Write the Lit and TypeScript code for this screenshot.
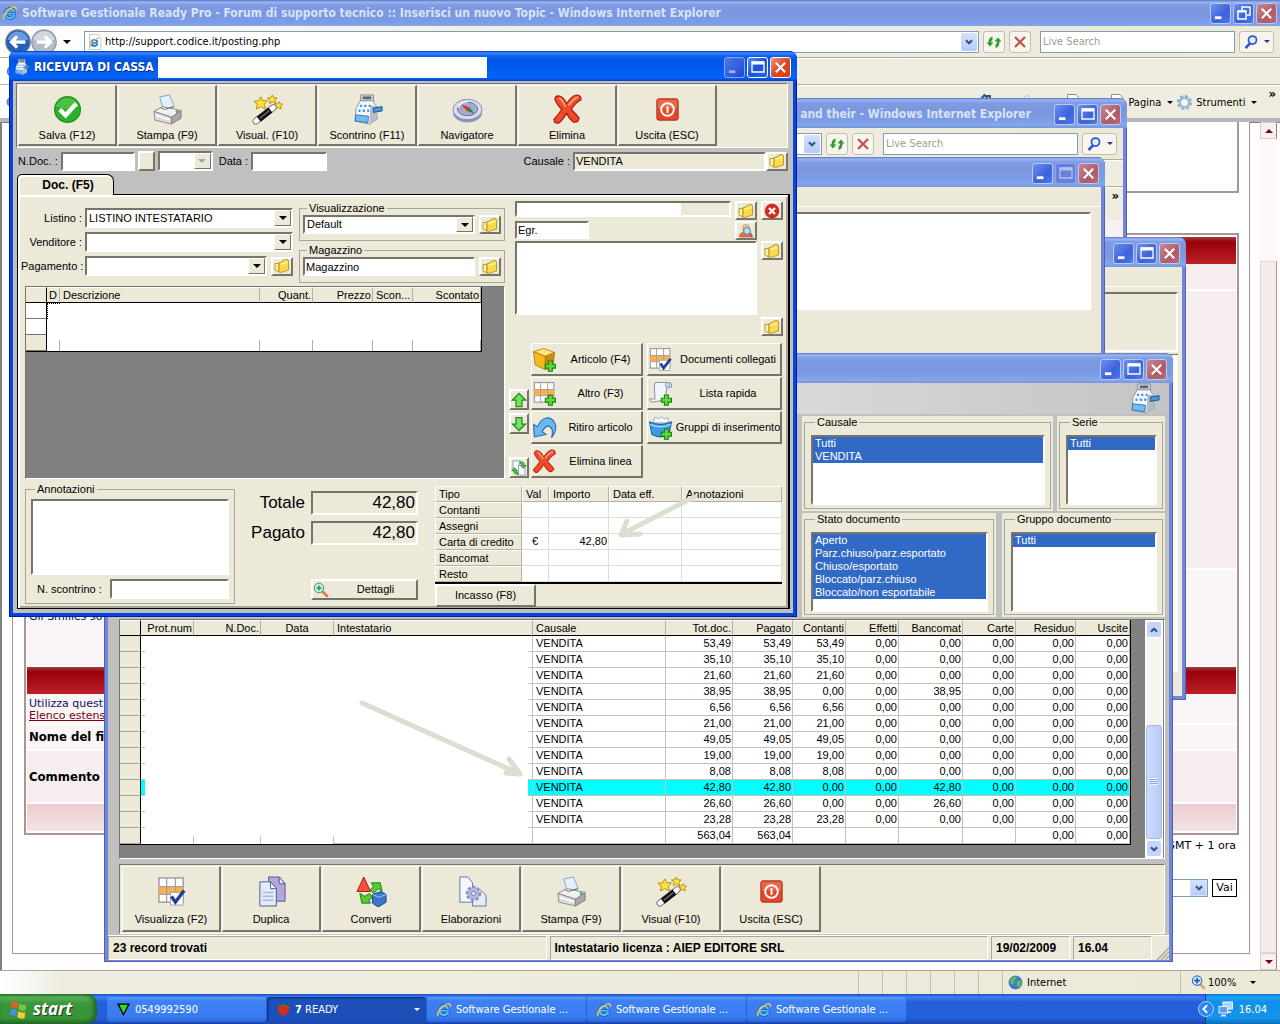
import { LitElement, html, svg, css, nothing, TemplateResult } from "lit";
import { customElement, property } from "lit/decorators.js";
import { classMap } from "lit/directives/class-map.js";

/* ---------- icons ---------- */
const icon = (size: number, body: TemplateResult, box = 32) =>
  html`<svg width=${size} height=${size} viewBox="0 0 ${box} ${box}" aria-hidden="true">${body}</svg>`;

const plus = svg`<path d="M21 18h5v4h4v5h-4v4h-5v-4h-4v-5h4z" fill="#5fd830" stroke="#17801a" stroke-width="1.4"/>`;
const sheetGrid = svg`
  <rect x="3" y="2" width="25" height="25" fill="#fff" stroke="#9d9aa8" stroke-width="1.5"/>
  <rect x="3" y="11" width="25" height="8" fill="#fbb04a"/>
  <path d="M3 11h25M3 19h25M11 2v25M20 2v25" stroke="#a8a0a0" stroke-width="1.3" fill="none"/>`;

const I = {
  check: svg`<circle cx="16" cy="16" r="14" fill="#1f9a1c"/><circle cx="16" cy="16" r="12.5" fill="#2fb02a"/>
    <path d="M4 13a12.500 12.500 0 0 1 24 0q-12 5-24 0z" fill="#62cc55" opacity=".6"/>
    <path d="M8 16l6 6 11-12" fill="none" stroke="#fff" stroke-width="4.500"/>`,
  printer: svg`<path d="M8 3l10-2 5 12-11 4z" fill="#e4f0fc" stroke="#8aa2c4"/>
    <path d="M2 18l9-5 19 4-9 7z" fill="#f2f2f2" stroke="#8c8c8c"/><path d="M2 18l18 6v7L3 27z" fill="#dcdcdc" stroke="#8c8c8c"/>
    <path d="M20 24l10-7v8l-10 6z" fill="#a8a8a8" stroke="#808080"/><path d="M4 22l15 5" stroke="#fff" stroke-width="1.500"/>
    <path d="M9 14l4 2 9-3" stroke="#666" fill="none"/><circle cx="26" cy="18" r="1.600" fill="#58b070"/>`,
  wand: svg`<path d="M4 28L22 14" stroke="#777" stroke-width="7" stroke-linecap="round"/><path d="M4 28L22 14" stroke="#fff" stroke-width="5" stroke-linecap="round"/>
    <path d="M7 26L19 16.500" stroke="#111" stroke-width="6.500"/><path d="M8 25l10-8" stroke="#777" stroke-width="1.300"/>
    <g fill="#ffe438" stroke="#b88a14" stroke-width="1"><path d="M9 3l2 4 5 0-3.500 3.500 1.500 5-5-2.500-4.500 2.500 1-5L2 7.500l5-.5z"/>
    <path d="M21 1l1.500 3 3.500 0-2.500 2.500 1 3.500-3.500-2-3 2 .5-3.500L16 4h3.500z"/><path d="M28 8l1 2 2.500.5-2 2 .5 3-2.500-1.500L25 15l.5-2.500-2-2 3-.5z"/></g>`,
  register: svg`<path d="M9 6l13-1 1 5 2 2 1 14-8 5L3 28l1-13z" fill="#f4f7fa" stroke="#8a949e"/>
    <path d="M19 12l6 0 1 14-8 5z" fill="#b4bcc6"/><path d="M9 1h13v6H9z" fill="#dfe3e8" stroke="#7c858e"/>
    <path d="M11 2.500h9v3h-9z" fill="#5c666e"/>
    <g fill="#3c94e4"><rect x="8" y="11" width="2.500" height="2.500" rx="1"/><rect x="12.500" y="11" width="2.500" height="2.500" rx="1"/><rect x="17" y="11" width="2.500" height="2.500" rx="1"/>
    <rect x="6.500" y="16" width="2.500" height="2.500" rx="1"/><rect x="11" y="16" width="2.500" height="2.500" rx="1"/><rect x="15.500" y="16" width="2.500" height="2.500" rx="1"/></g>
    <path d="M4 21.500l13 1.500-.5 6.500L3.500 28z" fill="#74bcf4" stroke="#3478b8"/><path d="M22 14.500l9-1.500v4.500l-9 1.500z" fill="#4898e4" stroke="#1c5294"/>`,
  compass: svg`<ellipse cx="16" cy="19" rx="15" ry="10.500" fill="#8f92ba"/><ellipse cx="16" cy="16" rx="15" ry="10.500" fill="#dcdcf2" stroke="#8488b0"/>
    <ellipse cx="16" cy="15.500" rx="10.500" ry="7" fill="#a3a8cc" stroke="#6c709c"/><path d="M9 10.500l9 3.500-2.500 3.500z" fill="#e23028"/><path d="M23 20l-7.500-2.500 2.500-3.500z" fill="#1c8a34"/>
    <path d="M6 14q4-6 10-6" stroke="#fff" fill="none" stroke-width="1.500"/>`,
  cross: svg`<path d="M7 2q5 1 8 8 5-8 10-9 5 0 5 5-6 3-10 10 5 5 8 9-1 5-6 4-4-3-7-9-4 7-8 10-5 1-5-4 4-4 8-10Q5 11 3 6q0-4 4-4z" fill="#ee4a2a" stroke="#a81c0c" stroke-width="1.200"/>
    <path d="M7 4q4 2 7 9M27 3q-5 2-10 9" stroke="#ff9a7c" fill="none" stroke-width="2"/>`,
  power: svg`<rect x="5" y="5" width="22" height="22" rx="2" fill="#e0482c" stroke="#a8301c"/><rect x="6" y="6" width="20" height="9" fill="#ee7454" opacity=".7"/>
    <circle cx="16" cy="16" r="6.500" fill="none" stroke="#fff" stroke-width="2"/><path d="M16 12.500v7" stroke="#fff" stroke-width="2"/>`,
  folder: svg`<path d="M2 11h8v17l-8-4z" fill="#fff0a0" stroke="#a88414" stroke-width="1.500"/><path d="M10 9l6-1 3-4 8-1 2 3v18l-16 5-3-1z" fill="#fbd94a" stroke="#a88414" stroke-width="1.500"/>
    <path d="M13 12l14-3" stroke="#fff3a8" stroke-width="3"/>`,
  stop: svg`<circle cx="16" cy="16" r="14" fill="#d42a20" stroke="#941008"/><path d="M10 10l12 12M22 10L10 22" stroke="#fff" stroke-width="4.500"/>`,
  person: svg`<path d="M3 28q0-9 9-10h10q7 2 7 10z" fill="#f0703c" stroke="#a84418"/><circle cx="16" cy="10" r="7" fill="#f6c49c" stroke="#b06c34"/>
    <circle cx="18" cy="16" r="7" fill="#b4dcf6" stroke="#4c7ca8" stroke-width="2"/><path d="M23 21l6 7" stroke="#986438" stroke-width="3"/>`,
  box: svg`<path d="M2 6l13-4 14 5-12 5z" fill="#ffe878" stroke="#a87810"/><path d="M2 6l15 6v17L4 23z" fill="#f4b820" stroke="#a87810"/><path d="M17 12l12-5-2 17-10 5z" fill="#c88a10" stroke="#a87810"/>${plus}`,
  gridPlus: svg`${sheetGrid}${plus}`,
  gridCheck: svg`${sheetGrid}<rect x="15" y="17" width="13" height="13" fill="#fff" stroke="#a0a0b0"/><path d="M16 21l4 6 9-12" stroke="#1c4496" stroke-width="3.500" fill="none"/>`,
  undo: svg`<path d="M2 12l1 16 15-3-5-4q5-9 10-6 5 3 2 14 7-9 5-17Q26 2 17 4q-6 2-10 11z" fill="#6cb6f2" stroke="#2467b0" stroke-width="1.300"/>`,
  scroll: svg`<path d="M8 5q1-4 5-3h14q4 1 3 6h-6l-2 16-15 3q-5 0-5-4h7z" fill="#f3f5fc" stroke="#8c94b0" stroke-width="1.300"/><circle cx="25" cy="5" r="3" fill="#cfd5ea" stroke="#8c94b0"/>${plus}`,
  basket: svg`<path d="M6 10l3-7 5 2 3-3 4 3 4-2 2 7z" fill="#f5f8ff" stroke="#8ca0bc"/><path d="M2 9q14 6 28 0l-3 16q-11 6-22 0z" fill="#3c9ae6" stroke="#175c9e" stroke-width="1.300"/><path d="M3 12q12 6 26 0" stroke="#a6daff" fill="none" stroke-width="2"/>${plus}`,
  up: svg`<path d="M16 3l13 13h-7v13H10V16H3z" fill="#7ce05c" stroke="#1c9024" stroke-width="2.500"/>`,
  down: svg`<path d="M16 29L3 16h7V3h12v13h7z" fill="#7ce05c" stroke="#1c9024" stroke-width="2.500"/>`,
  swap: svg`<rect x="4" y="2" width="13" height="20" fill="#fff" stroke="#7890b0" stroke-width="1.500"/><rect x="15" y="11" width="13" height="19" fill="#fff" stroke="#7890b0" stroke-width="1.500"/>
    <path d="M18 3q9 0 9 8h4l-6 6-6-6h3q0-4-4-4zM14 29q-9 0-9-8H1l6-6 6 6h-3q0 4 4 4z" fill="#40c03c" stroke="#157c1c"/>`,
  zoomPlus: svg`<path d="M19 19l9 9" stroke="#d87c40" stroke-width="5" stroke-linecap="round"/><circle cx="12" cy="12" r="9.500" fill="#c8f0dc" stroke="#4c8ca8" stroke-width="2"/><path d="M12 7v10M7 12h10" stroke="#148a3c" stroke-width="2.500"/>`,
  zoomBlue: svg`<path d="M19 19l9 9" stroke="#d0a060" stroke-width="5" stroke-linecap="round"/><circle cx="13" cy="12" r="10" fill="#d4e8fc" stroke="#3c6cb4" stroke-width="2.500"/><path d="M13 6v12M7 12h12" stroke="#1c58b8" stroke-width="3.500"/>`,
  pages: svg`<path d="M13 1h11l6 7v18H13z" fill="#b4a6dc" stroke="#5e5498"/><path d="M24 1v7h6z" fill="#ece8fa" stroke="#5e5498"/><path d="M4 6h11l6 7v18H4z" fill="#e2ebf8" stroke="#48608c"/><path d="M15 6v7h6z" fill="#fff" stroke="#48608c"/>
    <path d="M7 17h11M7 21h11M7 25h11" stroke="#a8bcdc" stroke-width="1.500"/>`,
  shapes: svg`<path d="M8 1l7 15H1z" fill="#f4523a" stroke="#a01c10"/><path d="M17 19l9-3 5 3v8l-8 5-6-4z" fill="#3c76cc" stroke="#16408c"/><path d="M17 19l7 3 7-3" fill="none" stroke="#a8c8f4"/>
    <path d="M16 7h9l0 0 2 9-4-3-5 5-3-4 3-3zM15 28H6L4 18l5 3 5-3 3 4-4 3z" fill="#54cc34" stroke="#187c14"/>`,
  gearPages: svg`<path d="M4 1h8l5 6v20H4z" fill="#f4f8ff" stroke="#5c78a8"/><path d="M17 14h8l6 6v11H17z" fill="#e4ecfa" stroke="#5c78a8"/>
    <circle cx="18" cy="18" r="6.500" fill="#b4b8e0" stroke="#8c90c0" stroke-width="3" stroke-dasharray="3 1.800"/><circle cx="18" cy="18" r="5.500" fill="#b4b8e0"/><circle cx="18" cy="18" r="2" fill="#fff" stroke="#6c70a8"/>`,
  ie: svg`<circle cx="16" cy="17" r="9" fill="none" stroke="#0c58b4" stroke-width="7" stroke-dasharray="49 7.500" stroke-dashoffset="-3"/><path d="M8 17.500h20" stroke="#0c58b4" stroke-width="5.500"/>
    <circle cx="16" cy="17" r="9" fill="none" stroke="#5cbcfa" stroke-width="4.500" stroke-dasharray="49 7.500" stroke-dashoffset="-3"/><path d="M8 17.500h19" stroke="#5cbcfa" stroke-width="3"/>
    <path d="M4 28Q1 21 12 11 24 1 28 5q1 1 0 5" fill="none" stroke="#fcc838" stroke-width="3"/>`,
  gear: svg`<circle cx="16" cy="16" r="11" fill="none" stroke="#86aac4" stroke-width="6" stroke-dasharray="5 3.600"/><circle cx="16" cy="16" r="8.500" fill="#fff" stroke="#9cbcd2" stroke-width="5"/><circle cx="16" cy="16" r="3.500" fill="#f4f4ec"/>`,
  refresh: svg`<path d="M13 5v7q-3 1-3 5h5l-7 8-7-8h4Q5 7 13 5z" fill="#2c9c2c"/><path d="M19 28v-7q3-1 3-6h-5l7-8 7 8h-4q0 11-8 13z" fill="#2c9c2c"/>`,
  redX: svg`<path d="M6 6l20 20M26 6L6 26" stroke="#c4504c" stroke-width="4.500"/>`,
  lens: svg`<path d="M14 19L5 28" stroke="#2c54d0" stroke-width="5"/><circle cx="19" cy="12" r="8" fill="#e4f2ff" stroke="#2c54d0" stroke-width="3.500"/>`,
  globe: svg`<circle cx="16" cy="16" r="14" fill="#3c7cd8" stroke="#1c4c9c"/><path d="M6 8q6-6 12-4 0 6-5 7l1 6-5 4-5-5zM18 14l8-3 3 6-4 9-6-2z" fill="#5cc04c"/>`,
  triangle: svg`<path d="M2 3h28L16 30z" fill="#000"/><path d="M7 6h18L16 24z" fill="#20e820"/>`,
  berry: svg`<path d="M16 8q12-5 13 5-2 12-13 18Q4 25 3 13 4 3 16 8z" fill="#cc3020"/><path d="M16 1l3 6 5 1-8 3-8-3 5-1z" fill="#4c7c24"/>`,
  flag: svg`<g transform="rotate(8 16 16)"><path d="M3 5q6-3 11 0v10q-5-3-11 0z" fill="#ee5a28"/><path d="M16 6q6 3 12 0v10q-6 3-12 0z" fill="#7cc43c"/><path d="M3 18q6-3 11 0v10q-5-3-11 0z" fill="#4c8cf0"/><path d="M16 19q6 3 12 0v10q-6 3-12 0z" fill="#fccc34"/></g>`,
  net: svg`<rect x="10" y="2" width="19" height="14" fill="#a8d4f8" stroke="#e8f4ff" stroke-width="2"/><path d="M15 20h10l2 4H13z" fill="#d8e4f0"/><rect x="2" y="11" width="17" height="13" fill="#5c9ce8" stroke="#e8f4ff" stroke-width="2"/><path d="M7 27h8l2 4H5z" fill="#d8e4f0"/>`,
  docIe: svg`<path d="M5 1h17l6 7v23H5z" fill="#fff" stroke="#909090"/><circle cx="15" cy="18" r="6" fill="none" stroke="#1c7cdc" stroke-width="4" stroke-dasharray="33 5" stroke-dashoffset="-2"/><path d="M10 18h12" stroke="#1c7cdc" stroke-width="3"/><path d="M6 26Q6 20 14 13t11-4" stroke="#f0b828" stroke-width="2.500" fill="none"/>`,
  doc: svg`<path d="M5 1h17l6 7v23H5z" fill="#fff" stroke="#8c8c94" stroke-width="2"/>`,
  home: svg`<path d="M2 16L15 2l5 5V4h6v9l5 4" fill="none" stroke="#34508c" stroke-width="4"/>`,
  star: svg`<circle cx="16" cy="16" r="13" fill="#6c94dc" stroke="#3c5ca8" stroke-width="2"/>`,
  back: svg`<circle cx="16" cy="16" r="15" fill="#2860b8" stroke="#6c7c98" stroke-width="1.500"/><path d="M3 13a13.500 13.500 0 0 1 26 0q-13 5-26 0z" fill="#6c9ce0"/><path d="M15 9l-7 7 7 7M9 16h16" stroke="#fff" stroke-width="4" fill="none"/>`,
  forward: svg`<circle cx="16" cy="16" r="15" fill="#b4bcc8" stroke="#8c94a4" stroke-width="1.500"/><path d="M3 13a13.500 13.500 0 0 1 26 0q-13 5-26 0z" fill="#d2d8e2"/><path d="M17 9l7 7-7 7M23 16H7" stroke="#fff" stroke-width="4" fill="none"/>`,
  chevron: svg`<path d="M9 12l7 7 7-7" fill="none" stroke="#34507c" stroke-width="4.500"/>`,
  chevronUp: svg`<path d="M9 20l7-7 7 7" fill="none" stroke="#34507c" stroke-width="4.500"/>`,
};

/* ---------- window frame ---------- */
@customElement("xp-window")
class XpWindow extends LitElement {
  @property() caption = "";
  @property({ type: Boolean, reflect: true }) active = false;
  @property({ type: Boolean, reflect: true }) maximized = false;
  @property({ type: Boolean }) fixed = false;
  @property({ attribute: false }) glyph: unknown = nothing;

  static styles = css`
    :host { display: flex; flex-direction: column; box-sizing: border-box; padding: 0 4px 4px; border-radius: 8px 8px 0 0;
      background: #7186d8; box-shadow: inset 1px -1px #4d5fc0, inset -1px 0 #4d5fc0; }
    :host([active]) { background: #0846d8; box-shadow: inset 1px -1px #001ca0, inset -1px 0 #001ca0; }
    :host([maximized]) { padding: 0; border-radius: 0; box-shadow: none; }
    .title { display: flex; align-items: center; gap: 2px; height: 30px; flex: none; box-sizing: border-box; margin: 0 -4px; padding: 2px 6px 0 5px;
      border-radius: 8px 8px 0 0; color: #d8e4f8; font: bold 12px/18px "DejaVu Sans Condensed", "DejaVu Sans", sans-serif; white-space: nowrap;
      background: linear-gradient(#5c70c8, #9ab6ee 2px, #7f9ce4 5px, #7a96df 12px, #7c9ce6 22px, #84a8ea 27px, #7894de); }
    :host([maximized]) .title { height: 26px; margin: 0; border-radius: 0; padding: 0 3px 0 2px; }
    :host([active]) .title { color: #fff; text-shadow: 1px 1px #0a2a80;
      background: linear-gradient(#0030b0, #3c8cff 2px, #0f62f0 5px, #0054e3 10px, #0060f8 22px, #0463f6 27px, #003cc8); }
    .caption { flex: 1; display: flex; align-items: center; gap: 4px; min-width: 0; overflow: hidden; }
    svg { flex: none; }
    button { width: 21px; height: 21px; padding: 0; border: 1px solid #b8caf4; border-radius: 3px; background: linear-gradient(135deg, #6c90f0, #3c62dc 60%, #4c78ec); display: grid; place-items: center; }
    :host([active]) button { border-color: #fff; background: linear-gradient(135deg, #5c8cf4, #1c50dc 50%, #2c64ee); }
    button.close { background: linear-gradient(135deg, #c88890, #b05c68 60%, #b86870); }
    :host([active]) button.close { background: linear-gradient(135deg, #f09878, #dc4820 50%, #d83c14); }
    button:disabled, :host([active]) button.min { border-color: #8ca4ec; background: linear-gradient(135deg, #4c78e8, #1c4ad0); }
    button:disabled { background: #6880dc; }
    button:disabled svg, :host([active]) button.min svg { opacity: .5; }
    .body { flex: 1; min-height: 0; display: flex; flex-direction: column; }
  `;

  render() {
    const mid = this.maximized
      ? svg`<path d="M6 5V2h8v8h-3" fill="none" stroke="#fff" stroke-width="1.500"/><path d="M2 6h8v8H2z" fill="none" stroke="#fff" stroke-width="1.500"/><path d="M2 6.500h8" stroke="#fff" stroke-width="2"/>`
      : svg`<path d="M2 3h12v10H2z" fill="none" stroke="#fff" stroke-width="1.300"/><path d="M2 4h12" stroke="#fff" stroke-width="3"/>`;
    return html`
      <div class="title">
        <div class="caption">${this.glyph}${this.caption ? html`<span>${this.caption}</span>` : nothing}<slot name="extra"></slot></div>
        <button class="min" aria-label="Riduci a icona">${icon(15, svg`<path d="M2 12.500h7" stroke="#fff" stroke-width="3"/>`, 16)}</button>
        <button class="max" aria-label="Ingrandisci" ?disabled=${this.fixed}>${icon(16, mid, 16)}</button>
        <button class="close" aria-label="Chiudi">${icon(15, svg`<path d="M3 3l10 10M13 3L3 13" stroke="#fff" stroke-width="2.200"/>`, 16)}</button>
      </div>
      <div class="body"><slot></slot></div>`;
  }
}

/* ---------- data ---------- */
const Z = "0,00";
const RECORDS: string[][] = [
  ["53,49", "53,49", "53,49", Z, Z], ["35,10", "35,10", "35,10", Z, Z], ["21,60", "21,60", "21,60", Z, Z],
  ["38,95", "38,95", Z, Z, "38,95"], ["6,56", "6,56", "6,56", Z, Z], ["21,00", "21,00", "21,00", Z, Z],
  ["49,05", "49,05", "49,05", Z, Z], ["19,00", "19,00", "19,00", Z, Z], ["8,08", "8,08", "8,08", Z, Z],
  ["42,80", "42,80", Z, Z, "42,80"], ["26,60", "26,60", Z, Z, "26,60"], ["23,28", "23,28", "23,28", Z, Z],
];
const SELECTED = 9;

@customElement("app-root")
class AppRoot extends LitElement {
  static styles = css`
    :host { display: grid; grid-template-rows: 1fr 30px; height: 100vh; overflow: hidden; color: #000; font: 11px/13px "Liberation Sans", Arial, sans-serif; }
    * { box-sizing: border-box; }
    button, input, select, textarea { font: inherit; color: inherit; margin: 0; border-radius: 0; }
    button { padding: 0; white-space: nowrap; }
    svg { flex: none; display: block; }
    .tahoma { font-family: "DejaVu Sans Condensed", "DejaVu Sans", sans-serif; }
    .desktop { position: relative; min-height: 0; overflow: hidden; }
    .desktop > xp-window { position: absolute; }
    .grow { flex: 1; }

    /* window places on the desktop */
    .w-main { inset: 0; }
    .w-ie { left: 300px; top: 98px; width: 827px; height: 400px; }
    .w-log { left: 500px; top: 237px; width: 686px; height: 463px; }
    .w-note { left: 500px; top: 157px; width: 605px; height: 300px; }
    .w-list { left: 104px; top: 353px; width: 1069px; height: 609px; }
    .w-dialog { left: 9px; top: 51px; width: 788px; height: 566px; }

    /* browser chrome */
    .address { display: flex; align-items: center; height: 32px; flex: none; padding: 0 6px 0 5px; background: linear-gradient(90deg, #fff, #f1efe4 40%, #ece9d8); border-bottom: 1px solid #b0ae9c; }
    .address .nav { border: 0; background: none; display: block; height: 27px; }
    .caret { width: 0; height: 0; border: 4px solid transparent; border-top-color: #000; border-bottom: 0; flex: none; }
    .address > .caret { margin-left: 6px; }
    .urlbox { flex: 1; display: flex; align-items: center; gap: 2px; height: 22px; margin-left: 13px; padding: 0 1px 0 2px; background: #fff; border: 1px solid #7f9db9; font-size: 11px; }
    .urlbox input { flex: 1; min-width: 0; border: 0; padding: 0; background: none; outline: 0; }
    .drop { width: 16px; height: 18px; border: 0; border-radius: 2px; background: linear-gradient(#d4e2fc, #b4cafa); display: grid; place-items: center; }
    .tool { width: 22px; height: 22px; margin-left: 4px; border: 1px solid #c4c0ac; border-radius: 3px; background: #f7f5ee; display: grid; place-items: center; }
    .search { width: 195px; height: 22px; margin-left: 9px; padding: 0 2px; border: 1px solid #7f9db9; background: #fff; }
    .search::placeholder { color: #a09c90; opacity: 1; }
    .go { width: 35px; height: 22px; margin-left: 4px; border: 1px solid #c4c0ac; border-radius: 3px; background: #f7f5ee; display: flex; align-items: center; justify-content: space-around; }
    .go .caret { border-width: 3px; border-bottom: 0; border-top-color: #1c3c8c; }
    .links { height: 27px; flex: none; background: linear-gradient(90deg, #fff, #efede0 500px); border-top: 1px solid #fff; border-bottom: 1px solid #b0ae9c; padding: 5px 6px; }
    .commands { height: 33px; flex: none; display: flex; align-items: center; gap: 3px; padding: 0 4px 0 6px; background: linear-gradient(90deg, #fff, #efede0 500px); border-top: 1px solid #fff; }
    .commands button { border: 0; background: none; display: flex; align-items: center; gap: 3px; }
    .commands .peek { width: 41px; }
    .commands .caret { margin-left: 3px; border-width: 3px; border-bottom: 0; }
    .more { align-self: flex-start; margin-left: 8px; font: bold 13px/15px "DejaVu Sans Condensed", sans-serif; }

    /* forum page */
    .page { flex: 1; min-height: 0; display: flex; background: #fffdfd; border-top: 4px solid #b4b6c0; box-shadow: inset 2px 1px #808080; padding: 0 3px 0 12px; }
    .sheet { flex: 1; margin-bottom: 16px; padding: 0 10px 0 11px; background: #fff; border: 1px solid #b09090; border-top: 0; font: 11px/12px "DejaVu Sans", sans-serif; display: flex; flex-direction: column; }
    .post { border: 2px solid #ac9494; padding: 2px 1px; flex: none; }
    .post.first { height: 71px; border-top: 0; margin-bottom: 40px; background: #fff; }
    .post .row { background: #f6eeee; border-bottom: 2px solid #fff; padding: 4px 2px; white-space: nowrap; }
    .post .lite { background: #faf5f6; }
    .band { height: 27px; background: linear-gradient(#a04040, #98000a 5px, #bc2028); }
    .band.soft { background: linear-gradient(#eccccc, #f4e4e4); }
    .h27 { height: 27px; } .h278 { height: 279px; } .h97 { height: 97px; } .h30 { height: 31px; } .h26 { height: 26px; } .h53 { height: 53px; }
    .post .h97 { padding-top: 41px; } .post .h53 { padding-top: 18px; }
    .sheet b { font: bold 13px/16px "DejaVu Sans Condensed", sans-serif; }
    .sheet a { color: #800010; }
    .navy { color: #101060; }
    .zone { text-align: right; padding: 5px 3px 0 0; }
    .jump { display: flex; justify-content: flex-end; gap: 4px; margin-top: 27px; }
    .jump button { width: 25px; height: 18px; border: 1px solid #000; background: #fff; margin-right: 2px; }
    .jump .combo { width: 120px; border: 1px solid #7f9db9; }
    .vscroll { width: 17px; margin-left: 10px; display: flex; flex-direction: column; background: #fdf8f7; }
    .vscroll button { height: 17px; flex: none; border: 1px solid #e0c8c8; border-right-color: #a08080; background: #f7f0ef; display: grid; place-items: center; }
    .vscroll .caret { border-top-color: #7c0014; }
    .vscroll .caret.flip { transform: rotate(180deg); }
    .vscroll .thumb { flex: 1; margin-top: 122px; border: 1px solid #e8d4d2; border-right-color: #b09090; background: #f5ebea; }
    .status { height: 24px; flex: none; display: flex; align-items: stretch; background: linear-gradient(90deg, #fff, #efede2 60px, #ece9d8); border-top: 1px solid #a8a698; line-height: 24px; }
    .status i { width: 24px; border-left: 1px solid #c4c0ac; }
    .status .zoneinfo { width: 178px; display: flex; align-items: center; gap: 4px; padding-left: 5px; border-left: 1px solid #c4c0ac; }
    .status .zoom { width: 100px; display: flex; align-items: center; gap: 2px; padding-left: 10px; border: 0; border-left: 1px solid #c4c0ac; background: none; font-size: 11px; }
    .status .zoom .caret { margin-left: 12px; border-width: 3px; border-bottom: 0; }

    /* classic controls */
    .inset { border: 2px solid; border-color: #77756a #fff #fff #77756a; background: #fff; outline: 0; padding: 0 1px; resize: none; display: block; min-width: 0; }
    .flat { background: #ece9d8; }
    .raised { border: 2px solid; border-color: #fff #77756a #77756a #fff; background: #ece9d8; display: flex; align-items: center; justify-content: center; }
    .mini { width: 22px; height: 19px; flex: none; }
    .combo { display: grid; grid-template-columns: 1fr 17px; border: 2px solid; border-color: #77756a #fff #fff #77756a; background: #fff; }
    .combo select { grid-area: 1 / 1 / 2 / 3; appearance: none; border: 0; background: none; padding: 0 2px; outline: 0; width: 100%; min-width: 0; }
    .combo .arrow { grid-area: 1 / 2; display: grid; place-items: center; pointer-events: none; background: #ece9d8; border: 1px solid; border-color: #fff #77756a #77756a #fff; }
    .combo.off .caret { border-top-color: #a8a698; }
    .combo .xp { background: linear-gradient(#d4e2fc, #b4cafa); border-color: #d4e2fc; }
    fieldset { margin: 0; padding: 0 3px 3px; border: 1px solid #a8a698; min-width: 0; }
    legend { padding: 0 2px; margin-left: 4px; line-height: 13px; }
    table { border-collapse: separate; border-spacing: 0; table-layout: fixed; }
    th, td { height: 16px; padding: 0 3px; line-height: 15px; font-weight: normal; text-align: left; overflow: hidden; white-space: nowrap; }
    th { line-height: 14px; background: #ece9d8; border-right: 1px solid #b4b2a4; border-top: 1px solid #fff; }
    .num { text-align: right; padding: 0 1px 0 0; }

    /* receipt dialog */
    .receipt { flex: 1; display: flex; flex-direction: column; background: #c0c0c0; padding: 2px 3px 4px; min-height: 0; }
    .bar { display: flex; flex: none; gap: 1px; padding: 1px; border: 1px solid; border-color: #77756a #fff #fff #77756a; background: #ece9d8; }
    .bar button { width: 99px; height: 61px; flex-direction: column; justify-content: flex-end; gap: 4px; padding-bottom: 2px; border-width: 1px 2px 2px 1px; }
    .receipt > .bar { margin-right: 2px; }
    .mask { width: 329px; height: 21px; background: #fff; }
    .head { display: flex; align-items: center; height: 26px; flex: none; gap: 3px; padding: 0 2px; }
    .head .ndoc { width: 74px; } .head .date { width: 76px; } .head .cause { width: 193px; } .head .inset { height: 19px; }
    .head .numera { width: 17px; height: 20px; } .head .serie { width: 55px; height: 20px; }
    .head .tight { display: flex; }
    .date-label { margin-left: 3px; }
    .tabs { display: flex; height: 20px; flex: none; position: relative; z-index: 1; margin-left: 1px; }
    .tab { width: 97px; height: 21px; border: 1px solid #000; border-bottom: 0; border-radius: 5px 7px 0 0; background: #ece9d8; box-shadow: inset 2px 2px #fff; font-weight: bold; font-size: 12px; padding-left: 5px; }
    .panel { flex: 1; min-height: 0; margin-left: 1px; border: 1px solid #000; border-width: 1px 2px 1px 1px; background: #ece9d8; box-shadow: inset 2px 2px #fff, inset -2px -2px #a8a698; padding: 6px 6px 0 7px; }
    .upper { display: grid; grid-template-columns: 480px 1fr; gap: 4px; height: 278px; }
    .left { display: flex; flex-direction: column; gap: 3px; padding-top: 1px; }
    .setup { display: flex; gap: 6px; }
    .form { width: 268px; display: grid; grid-template-columns: 57px 1fr; gap: 4px 3px; align-content: start; padding-top: 6px; }
    .form label { text-align: right; line-height: 20px; margin-left: -4px; white-space: nowrap; }
    .form .combo { height: 20px; }
    .pair { display: flex; gap: 4px; align-items: center; }
    .pair > .combo, .pair > .inset { flex: 1; }
    .sets { flex: 1; display: grid; gap: 3px; min-width: 0; }
    .sets fieldset { height: 39px; }
    .sets .combo, .sets .inset { height: 19px; }
    .lines { flex: 1; background: #808080; border: 1px solid; border-color: #77756a #fff #fff #77756a; }
    .lines table { width: 455px; background: #fff; border-right: 1px solid #000; border-bottom: 1px solid #000; }
    .lines th, .lines td:first-child { border-bottom: 1px solid #77756a; }
    .lines th { border-bottom-color: #000; }
    .lines .slim { padding: 0 2px; }
    .lines th:first-child, .lines td:first-child { border-right: 1px solid #000; }
    .lines tr:last-child td { border-right: 1px solid; border-image: linear-gradient(#fff 5px, #b4b2a4 5px) 1; }
    .lines tr:last-child td:first-child { background: #ece9d8; border-image: none; border-color: #000; border-bottom-color: #77756a; }
    .focus { border-left: 1px dotted #000; border-top: 1px dotted #000; }
    .right { display: flex; flex-direction: column; gap: 7px; }
    .customer { display: grid; grid-template-columns: 216px 22px 22px; gap: 2px 4px; padding-left: 6px; height: 135px; grid-template-rows: 18px 18px 74px 19px; }
    .customer .name { height: 16px; background: linear-gradient(90deg, #fff 164px, #ece9d8 164px); }
    .customer .egr { width: 74px; height: 18px; }
    .customer .addr { grid-column: 1 / 3; height: 74px; }
    .customer .last { grid-column: 3; grid-row: 4; }
    .third { grid-column: 3; }
    .actions { display: grid; grid-template-columns: 18px 112px 135px; column-gap: 4px; row-gap: 1px; grid-template-rows: repeat(4, 33px); }
    .actions .big { display: grid; grid-template-columns: 28px 1fr; overflow: hidden; border-width: 1px 2px 2px 1px; }
    .actions .c2 { grid-column: 2; } .actions .c3 { grid-column: 3; }
    .movers { grid-column: 1; grid-row: 2 / 5; display: flex; flex-direction: column; gap: 3px; padding-top: 12px; }
    .movers button { height: 21px; width: 20px; }
    .movers .swap { margin-top: 20px; }
    .lower { display: flex; align-items: flex-start; padding-top: 4px; }
    .notes { width: 210px; padding: 0 5px 4px; }
    .notes textarea { width: 100%; height: 76px; margin: 3px 0 4px; }
    .slip { display: flex; align-items: center; gap: 8px; padding-left: 6px; }
    .slip input { flex: 1; height: 20px; }
    .totals { width: 183px; display: grid; grid-template-columns: 1fr 107px; gap: 6px; align-content: start; padding-top: 8px; font: 17px/24px "Liberation Sans", Arial, sans-serif; }
    .totals label { text-align: right; }
    .totals input { height: 24px; text-align: right; width: 100%; }
    .totals .raised { grid-column: 2; margin-top: 28px; height: 21px; font-size: 11px; line-height: 13px; display: grid; grid-template-columns: 22px 1fr; }
    .pay { width: 347px; padding-top: 3px; margin-left: auto; }
    .pay table { width: 347px; background: #fff; border-bottom: 2px solid #000; }
    .pay th { border-bottom: 1px solid #b4b2a4; border-left: 1px solid #fff; }
    .pay td { border-right: 1px solid #e0decf; border-bottom: 1px solid #e0decf; }
    .pay .mid { text-align: center; padding: 0; }
    .pay .raised { width: 101px; height: 23px; }

    /* records window */
    .records { flex: 1; display: flex; flex-direction: column; background: #c0c0c0; min-height: 0; }
    .ribbon { height: 31px; flex: none; display: flex; justify-content: flex-end; padding-right: 9px; background: linear-gradient(90deg, #fff, #c4c4c4); }
    .filters { display: flex; flex-direction: column; gap: 2px; padding: 2px 4px 2px; align-items: flex-end; }
    .filters > div { display: flex; gap: 4px; width: 363px; }
    .filters > div:last-child { gap: 6px; }
    .box { background: #ece9d8; padding: 0 2px 2px; flex: 1; min-width: 0; }
    .box fieldset { height: 100%; padding: 6px 5px 7px 6px; }
    .r1 .box { height: 95px; } .r2 .box { height: 104px; }
    .box.a { flex: none; width: 251px; } .box.b { flex: none; width: 194px; }
    .box select { display: block; width: 100%; height: 100%; padding: 0; overflow: hidden; scrollbar-width: none; }
    .r1 .box select { height: 70px; } .r2 .box select { height: 80px; }
    option { padding: 0 2px; min-height: 13px; line-height: 13px; }
    .box option:checked { background: linear-gradient(#316ac5, #316ac5); -webkit-text-fill-color: #fff; }
    .gridwrap { display: flex; justify-content: space-between; align-items: stretch; height: 240px; flex: none; margin: 0 4px 0 11px; background: #808080; border: 1px solid; border-color: #77756a #fff #fff #77756a; }
    .gridwrap table { width: 1010px; align-self: flex-start; background: #fff; border-right: 1px solid #000; border-bottom: 1px solid #000; }
    .gridwrap th, .gridwrap td { border-bottom: 1px solid #c0c0c0; }
    .gridwrap td { border-right: 1px solid #c0c0c0; }
    .gridwrap thead th { border-bottom-color: #000; }
    .gridwrap tr > :first-child { background: #ece9d8; border-right-color: #000; border-bottom-color: #a8a698; }
    .gridwrap thead tr > :first-child { border-bottom-color: #000; }
    .gridwrap td.hidden { padding: 0 4px; border-bottom: 0; box-shadow: inset 0 -1px #c0c0c0; }
    .hidden div { height: 16px; background: #fff; }
    .gridwrap td.tick { border-right: 0; border-bottom: 0; background: linear-gradient(#c0c0c0, #c0c0c0) right bottom / 1px 8px no-repeat; }
    .gridwrap .sel td { background: #0ff; }
    .gridwrap .sel td:first-child { background: #ece9d8; }
    th.mid { text-align: center; }
    .xpscroll { width: 18px; display: flex; flex-direction: column; background: #f6f5f0; border: 1px solid #fff; margin-right: 1px; }
    .xpscroll button { height: 17px; border: 1px solid #fff; border-radius: 3px; background: #c4d4fc; display: grid; place-items: center; flex: none; }
    .xpscroll .thumb { flex: 1; margin: 87px 0 1px; border: 1px solid #a4b8ec; border-radius: 3px; background: linear-gradient(90deg, #cddcfe, #b8ccfa); display: grid; place-items: center; }
    .records > .bar { margin: 5px 4px 0 11px; height: 70px; padding: 1px 2px; }
    .records > .bar button { height: 66px; gap: 6px; padding-bottom: 4px; }
    .foot { display: flex; gap: 3px; margin-top: 1px; flex: 1; background: #ece9d8; border-top: 1px solid #fff; font-weight: bold; font-size: 12px; line-height: 22px; }
    .foot span { border: 1px solid; border-color: #a8a698 #fff #fff #a8a698; padding-left: 4px; }
    .foot .f1 { flex: 1; } .foot .f2 { width: 79px; } .foot .grip { align-self: flex-end; width: 14px; }

    /* partly covered windows */
    .plain { flex: 1; background: #ece9d8; display: flex; flex-direction: column; padding-top: 19px; }
    .plain .well { margin: 5px 10px 0 0; height: 98px; border: 2px solid; border-color: #77756a #fff #fff #77756a; background: #fff; }
    .plain hr { width: 100%; margin: 0; border: 0; border-top: 1px solid #fff; }
    .plain .well.dim { background: #ece9d8; height: 60px; margin-right: 4px; }
    .plain .side { flex: 1; margin: 2px 4px 24px 0; background: #fbfaf6; border-top: 1px solid #77756a; }
    .under { flex: 1; display: flex; flex-direction: column; background: #f8f0f0; }
    .cap-pad { margin-left: auto; margin-right: 21px; }

    /* canvas marks */
    .mark { position: absolute; pointer-events: none; }
    .mark.m1 { left: 355px; top: 695px; }
    .mark.m2 { left: 612px; top: 491px; }

    /* taskbar */
    .taskbar { display: flex; align-items: stretch; background: linear-gradient(#1c4cc0, #3c80f0 3px, #245edb 8px, #2460dc 24px, #1c44a8); color: #fff; }
    .start { width: 97px; border: 0; border-radius: 0 10px 10px 0; background: linear-gradient(#2c7c2c, #58b058 3px, #3a963a 10px, #389438 24px, #246c24); box-shadow: inset -3px 0 4px #246024; display: flex; align-items: center; gap: 5px; padding-left: 9px; font: italic bold 17px/20px "Open Sans", sans-serif; color: #fff; text-shadow: 1px 1px 1px #1c401c; }
    .tasks { flex: 1; display: flex; gap: 1px; padding: 3px 0 2px 10px; }
    .task { width: 159px; border: 0; border-radius: 3px; background: linear-gradient(#5c9cff, #3c80f4 4px, #3a7cf0 20px, #2c64d8); display: flex; align-items: center; gap: 4px; padding: 0 6px 0 9px; color: #fff; }
    .task.on { background: #1c50b8; box-shadow: inset 1px 1px 2px #0c2c80; }
    .task .caret { margin-left: auto; border-width: 3px; border-bottom: 0; border-top-color: #fff; }
    .tray { width: 75px; display: flex; align-items: center; justify-content: space-between; padding-right: 13px; background: linear-gradient(#0c78d0, #1ca4f4 3px, #1290e8 8px, #1494ec 24px, #0c6cb8); border-left: 1px solid #0c3c90; }
    .tray button { width: 16px; height: 16px; margin-left: -8px; border: 1px solid #a8d4fc; border-radius: 50%; background: #2c84ee; display: grid; place-items: center; }
  `;

  private combo(label: string, value = "", cls = "", id = "") {
    return html`<span class="combo ${cls}"><select id=${id || nothing} aria-label=${label} ?disabled=${cls.includes("off")}><option>${value}</option></select><span class="arrow"><span class="caret"></span></span></span>`;
  }
  private mini(label: string, glyph: TemplateResult, cls = "", size = 16) {
    return html`<button class="raised mini ${cls}" aria-label=${label}>${icon(size, glyph)}</button>`;
  }
  private toolBar(items: [string, TemplateResult][]) {
    return html`<div class="bar">${items.map(([t, g]) => html`<button class="raised">${icon(31, g)}<span>${t}</span></button>`)}</div>`;
  }
  private big(label: string, glyph: TemplateResult, cls: string) {
    return html`<button class="raised big ${cls}">${icon(25, glyph)}<span>${label}</span></button>`;
  }
  private listbox(title: string, options: string[], cls = "") {
    return html`<div class="box ${cls}"><fieldset><legend>${title}</legend>
      <select class="inset" multiple aria-label=${title}>${options.map((o) => html`<option selected>${o}</option>`)}</select></fieldset></div>`;
  }
  private addressBar(url: unknown) {
    return html`<div class="address tahoma">${url}
      <button class="tool" aria-label="Aggiorna">${icon(16, I.refresh)}</button><button class="tool" aria-label="Interrompi">${icon(16, I.redX)}</button>
      <input class="search" placeholder="Live Search" aria-label="Live Search">
      <button class="go" aria-label="Cerca">${icon(16, I.lens)}<span class="caret"></span></button></div>`;
  }

  private mainBrowser() {
    return html`<xp-window class="w-main" maximized .glyph=${icon(16, I.ie)}
      caption="Software Gestionale Ready Pro - Forum di supporto tecnico :: Inserisci un nuovo Topic - Windows Internet Explorer">
      ${this.addressBar(html`<button class="nav" aria-label="Indietro">${icon(26, I.back)}</button><button class="nav" aria-label="Avanti">${icon(26, I.forward)}</button>
        <span class="caret"></span>
        <div class="urlbox">${icon(16, I.docIe)}<input aria-label="Indirizzo" value="http://support.codice.it/posting.php"><button class="drop" aria-label="Apri elenco">${icon(14, I.chevron)}</button></div>`)}
      <div class="links">${icon(15, I.star)}</div>
      <div class="commands tahoma">${icon(10, I.star)}<span class="grow"></span>
        <button class="peek" aria-label="Pagina iniziale">${icon(16, I.home)}</button><button class="peek" aria-label="Feed">${icon(14, I.printer)}</button><button class="peek" aria-label="Stampa">${icon(16, I.doc)}</button>
        <button>${icon(16, I.doc)}Pagina<span class="caret"></span></button>
        <button>${icon(17, I.gear)}Strumenti<span class="caret"></span></button><span class="more">»</span></div>
      <div class="page">
        <div class="sheet">
          <div class="post first"></div>
          <div class="post">
            <div class="band"></div><div class="row h27"></div><div class="row h278"></div>
            <div class="row h97 lite"><span class="navy">Gli Smilies so</span></div>
            <div class="band"></div>
            <div class="row h30 lite"><span class="navy">Utilizza quest</span><br><a href="#">Elenco estens</a></div>
            <div class="row h26 lite"><b>Nome del fi</b></div>
            <div class="row h53"><b>Commento a</b></div>
            <div class="band soft"></div>
          </div>
          <div class="zone">GMT + 1 ora</div>
          <div class="jump"><span class="combo"><select aria-label="Vai a"><option></option></select><span class="arrow xp">${icon(14, I.chevron)}</span></span><button>Vai</button></div>
        </div>
        <div class="vscroll"><button aria-label="Su"><span class="caret flip"></span></button><div class="thumb"></div><button aria-label="Giù"><span class="caret"></span></button></div>
      </div>
      <div class="status tahoma"><span class="grow"></span>${[0, 1, 2, 3, 4, 5].map(() => html`<i></i>`)}
        <span class="zoneinfo">${icon(15, I.globe)}Internet</span><button class="zoom">${icon(15, I.zoomBlue)}100%<span class="caret"></span></button></div>
    </xp-window>`;
  }

  private records() {
    const widths = [21, 53, 67, 73, 199, 133, 67, 60, 53, 53, 64, 53, 60, 54];
    return html`<xp-window class="w-list">
      <div class="records">
        <div class="ribbon">${icon(31, I.register)}</div>
        <div class="filters">
          <div class="r1">${this.listbox("Causale", ["Tutti", "VENDITA"], "a")}${this.listbox("Serie", ["Tutti"])}</div>
          <div class="r2">${this.listbox("Stato documento", ["Aperto", "Parz.chiuso/parz.esportato", "Chiuso/esportato", "Bloccato/parz.chiuso", "Bloccato/non esportabile"], "b")}${this.listbox("Gruppo documento", ["Tutti"])}</div>
        </div>
        <div class="gridwrap">
          <table>
            <colgroup>${widths.map((w) => html`<col style="width:${w}px">`)}</colgroup>
            <thead><tr><th></th><th class="num">Prot.num</th><th class="num">N.Doc.</th><th class="mid">Data</th><th>Intestatario</th><th>Causale</th>
              ${["Tot.doc.", "Pagato", "Contanti", "Effetti", "Bancomat", "Carte", "Residuo", "Uscite"].map((h) => html`<th class="num">${h}</th>`)}</tr></thead>
            <tbody>
              ${RECORDS.map((r, i) => html`<tr class=${classMap({ sel: i === SELECTED })}><td></td><td class="hidden" colspan="4"><div></div></td><td>VENDITA</td>
                ${[...r, Z, Z, Z].map((v) => html`<td class="num">${v}</td>`)}</tr>`)}
              <tr><td></td><td class="tick"></td><td class="tick"></td><td class="tick"></td><td></td><td></td><td class="num">563,04</td><td class="num">563,04</td><td></td><td></td><td></td><td></td><td class="num">0,00</td><td class="num">0,00</td></tr>
            </tbody>
          </table>
          <div class="xpscroll"><button aria-label="Su">${icon(14, I.chevronUp)}</button>
            <div class="thumb">${icon(8, svg`<path d="M0 .5h8M0 2.500h8M0 4.500h8M0 6.500h8" stroke="#eef4fe"/><path d="M0 1.500h8M0 3.500h8M0 5.500h8" stroke="#8ca8ec"/>`, 8)}</div><button aria-label="Giù">${icon(14, I.chevron)}</button></div>
        </div>
        ${this.toolBar([["Visualizza (F2)", I.gridCheck], ["Duplica", I.pages], ["Converti", I.shapes], ["Elaborazioni", I.gearPages], ["Stampa (F9)", I.printer], ["Visual (F10)", I.wand], ["Uscita (ESC)", I.power]])}
        <div class="foot"><span class="f1">23 record trovati</span><span class="f1">Intestatario licenza : AIEP EDITORE SRL</span><span class="f2">19/02/2009</span><span class="f2">16.04</span>
          <div class="grip">${icon(14, svg`<path d="M14 2L2 14M14 6l-8 8M14 10l-4 4" stroke="#a8a698" stroke-width="1.500"/>`, 14)}</div></div>
      </div>
    </xp-window>`;
  }

  private receipt() {
    return html`<xp-window class="w-dialog" active caption="RICEVUTA DI CASSA" .glyph=${icon(16, I.register)}>
      <div slot="extra" class="mask"></div>
      <div class="receipt">
        ${this.toolBar([["Salva (F12)", I.check], ["Stampa (F9)", I.printer], ["Visual. (F10)", I.wand], ["Scontrino (F11)", I.register], ["Navigatore", I.compass], ["Elimina", I.cross], ["Uscita (ESC)", I.power]])}
        <div class="head">
          <label for="ndoc">N.Doc. :</label><input id="ndoc" class="inset ndoc">
          <button class="raised numera" aria-label="Numera"></button>
          ${this.combo("Serie", "", "off serie")}
          <label class="date-label" for="date">Data :</label><input id="date" class="inset date">
          <span class="grow"></span>
          <label for="cause">Causale :</label><span class="tight"><input id="cause" class="inset flat cause" value="VENDITA">${this.mini("Apri causale", I.folder)}</span>
        </div>
        <div class="tabs"><button class="tab">Doc. (F5)</button></div>
        <div class="panel">
          <div class="upper">
            <div class="left">
              <div class="setup">
                <div class="form">
                  <label for="listino">Listino :</label>${this.combo("Listino", "LISTINO INTESTATARIO", "", "listino")}
                  <label for="venditore">Venditore :</label>${this.combo("Venditore", "", "", "venditore")}
                  <label for="pagamento">Pagamento :</label><div class="pair">${this.combo("Pagamento", "", "", "pagamento")}${this.mini("Apri pagamento", I.folder)}</div>
                </div>
                <div class="sets">
                  <fieldset><legend>Visualizzazione</legend><div class="pair">${this.combo("Visualizzazione", "Default")}${this.mini("Apri visualizzazione", I.folder)}</div></fieldset>
                  <fieldset><legend>Magazzino</legend><div class="pair"><input class="inset" aria-label="Magazzino" value="Magazzino">${this.mini("Apri magazzino", I.folder)}</div></fieldset>
                </div>
              </div>
              <div class="lines">
                <table>
                  <colgroup>${[21, 13, 200, 53, 60, 40, 68].map((w) => html`<col style="width:${w}px">`)}</colgroup>
                  <thead><tr><th></th><th class="slim">D</th><th>Descrizione</th><th class="num">Quant.</th><th class="num">Prezzo</th><th>Scon...</th><th class="num">Scontato</th></tr></thead>
                  <tbody><tr><td></td><td class="focus"></td><td colspan="5"></td></tr><tr><td></td><td colspan="6"></td></tr>
                    <tr><td></td><td></td><td></td><td></td><td></td><td></td><td></td></tr></tbody>
                </table>
              </div>
            </div>
            <div class="right">
              <div class="customer">
                <input class="inset name" aria-label="Intestatario">${this.mini("Apri intestatario", I.folder)}${this.mini("Rimuovi", I.stop)}
                <input class="inset egr" aria-label="Titolo" value="Egr.">${this.mini("Cerca persona", I.person)}<span></span>
                <textarea class="inset addr" aria-label="Indirizzo"></textarea>${this.mini("Apri indirizzo", I.folder, "third")}
                ${this.mini("Apri destinazione", I.folder, "last")}
              </div>
              <div class="actions">
                <div class="movers">${this.mini("Sposta su", I.up)}${this.mini("Sposta giù", I.down)}${this.mini("Scambia", I.swap, "swap")}</div>
                ${this.big("Articolo (F4)", I.box, "c2")}${this.big("Documenti collegati", I.gridCheck, "c3")}
                ${this.big("Altro (F3)", I.gridPlus, "c2")}${this.big("Lista rapida", I.scroll, "c3")}
                ${this.big("Ritiro articolo", I.undo, "c2")}${this.big("Gruppi di inserimento", I.basket, "c3")}
                ${this.big("Elimina linea", I.cross, "c2")}
              </div>
            </div>
          </div>
          <div class="lower">
            <fieldset class="notes"><legend>Annotazioni</legend><textarea class="inset" aria-label="Annotazioni"></textarea>
              <div class="slip"><label for="slip">N. scontrino :</label><input id="slip" class="inset"></div></fieldset>
            <div class="totals"><label for="tot">Totale</label><input id="tot" class="inset flat" value="42,80"><label for="paid">Pagato</label><input id="paid" class="inset flat" value="42,80">
              <button class="raised">${icon(16, I.zoomPlus)}<span>Dettagli</span></button></div>
            <div class="pay">
              <table>
                <colgroup>${[87, 27, 60, 73, 100].map((w) => html`<col style="width:${w}px">`)}</colgroup>
                <thead><tr><th>Tipo</th><th>Val</th><th>Importo</th><th>Data eff.</th><th>Annotazioni</th></tr></thead>
                <tbody>${["Contanti", "Assegni", "Carta di credito", "Bancomat", "Resto"].map((t, i) => html`<tr><th>${t}</th><td class="mid">${i === 2 ? "€" : ""}</td><td class="num">${i === 2 ? "42,80" : ""}</td><td></td><td></td></tr>`)}</tbody>
              </table>
              <button class="raised">Incasso (F8)</button>
            </div>
          </div>
        </div>
      </div>
    </xp-window>`;
  }

  render() {
    return html`
      <main class="desktop">
        ${this.mainBrowser()}
        <xp-window class="w-ie"><span slot="extra" class="cap-pad">and their - Windows Internet Explorer</span>
          <div class="under">${this.addressBar(html`<div class="urlbox"><input aria-label="Indirizzo"><button class="drop" aria-label="Apri elenco">${icon(14, I.chevron)}</button></div>`)}
            <div class="links"></div><div class="commands"><span class="grow"></span><span class="more">»</span></div></div>
        </xp-window>
        <xp-window class="w-log"><div class="plain"><hr><div class="well dim"></div><div class="side"></div></div></xp-window>
        <xp-window class="w-note" fixed><div class="plain"><hr><div class="well"></div></div></xp-window>
        ${this.records()}
        ${this.receipt()}
        <svg class="mark m1" width="172" height="86" viewBox="0 0 172 86" fill="none" stroke="#deddd2" stroke-width="5" stroke-linecap="round" stroke-linejoin="round"><path d="M7 8l158 71M154 64l11 15-14-1"/></svg>
        <svg class="mark m2" width="92" height="54" viewBox="0 0 92 54" fill="none" stroke="#deddd2" stroke-width="5" stroke-linecap="round" stroke-linejoin="round"><path d="M82 6L10 43M15 30l-6 14 19-1"/></svg>
      </main>
      <footer class="taskbar tahoma">
        <button class="start">${icon(19, I.flag)}start</button>
        <nav class="tasks">
          <button class="task">${icon(15, I.triangle)}0549992590</button>
          <button class="task on">${icon(15, I.berry)}<span><b>7</b> READY</span><span class="caret"></span></button>
          ${[0, 1, 2].map(() => html`<button class="task">${icon(16, I.ie)}Software Gestionale ...</button>`)}
        </nav>
        <div class="tray"><button aria-label="Mostra icone">${icon(12, svg`<path d="M19 6L9 16l10 10" fill="none" stroke="#fff" stroke-width="5"/>`)}</button>${icon(16, I.net)}<span>16.04</span></div>
      </footer>`;
  }
}
